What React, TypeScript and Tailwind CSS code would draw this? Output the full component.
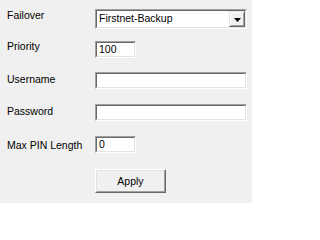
import type { ReactNode } from "react";

function Sunken({ className, children }: { className: string; children?: ReactNode }) {
  return (
    <div className={`flex border-t border-l border-t-[#a0a0a0] border-l-[#a0a0a0] border-b border-r border-b-white border-r-white ${className}`}>
      <div className="flex flex-1 border-t border-l border-t-[#696969] border-l-[#696969] border-b border-r border-b-[#e3e3e3] border-r-[#e3e3e3] bg-white">
        {children}
      </div>
    </div>
  );
}

function TextField({ value, className }: { value: string; className: string }) {
  return (
    <Sunken className={`h-[17px] ${className}`}>
      <input
        readOnly
        value={value}
        className="w-full bg-transparent pl-[2px] leading-[13px] outline-none"
      />
    </Sunken>
  );
}

function Row({ label, labelOffset, top, children }: { label: string; labelOffset: string; top: string; children: ReactNode }) {
  return (
    <div className={`flex items-start ${top}`}>
      <span className={`w-[88px] shrink-0 ${labelOffset}`}>{label}</span>
      {children}
    </div>
  );
}

export default function App() {
  return (
    <div className="h-[203px] w-[252px] overflow-hidden bg-[#f0f0f0] pl-[7px] pt-[9px] font-['Liberation_Sans',Arial,sans-serif] text-[10.5px] leading-[13px] text-black">
      <Row label="Failover" labelOffset="mt-0" top="mt-0">
        <Sunken className="h-[20px] w-[152px]">
          <span className="flex-1 pl-[2px] pt-[1px]">Firstnet-Backup</span>
          <div className="flex w-[16px] border-t border-l border-t-[#e3e3e3] border-l-[#e3e3e3] border-b border-r border-b-[#696969] border-r-[#696969]">
            <div className="flex flex-1 items-center justify-center border-t border-l border-t-white border-l-white border-b border-r border-b-[#a0a0a0] border-r-[#a0a0a0] bg-[#f0f0f0]">
              <svg width="7" height="4" viewBox="0 0 7 4" className="mt-[1px]">
                <path d="M0 0h7L3.5 4z" fill="#000" />
              </svg>
            </div>
          </div>
        </Sunken>
      </Row>
      <Row label="Priority" labelOffset="-mt-[1px]" top="mt-[12px]">
        <TextField value="100" className="w-[41px]" />
      </Row>
      <Row label="Username" labelOffset="mt-[1px]" top="mt-[14px]">
        <TextField value="" className="w-[152px]" />
      </Row>
      <Row label="Password" labelOffset="mt-[1px]" top="mt-[15px]">
        <TextField value="" className="w-[152px]" />
      </Row>
      <Row label="Max PIN Length" labelOffset="mt-[3px]" top="mt-[15px]">
        <TextField value="0" className="w-[41px]" />
      </Row>
      <div className="mt-[16px] pl-[88px]">
        <button className="flex h-[24px] w-[71px] border-t border-l border-t-white border-l-white border-b border-r border-b-[#696969] border-r-[#696969]">
          <span className="flex flex-1 items-center justify-center border-t border-l border-t-[#e3e3e3] border-l-[#e3e3e3] border-b border-r border-b-[#a0a0a0] border-r-[#a0a0a0] bg-[#f0f0f0]">
            Apply
          </span>
        </button>
      </div>
    </div>
  );
}
